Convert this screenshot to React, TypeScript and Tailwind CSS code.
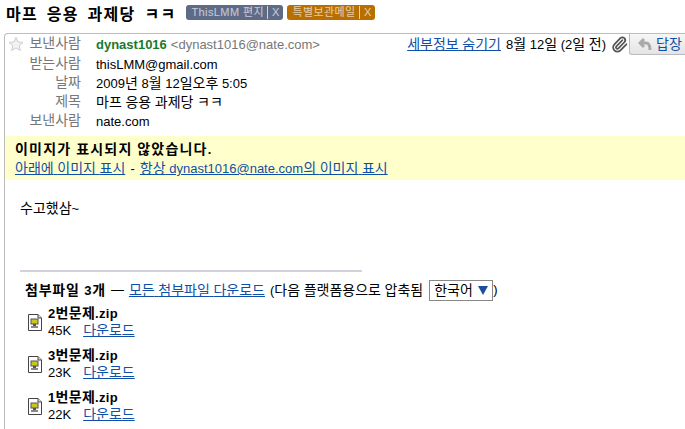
import { Paperclip } from "lucide-react";

const FONT = "font-['Liberation_Sans','Noto_Sans_CJK_KR',sans-serif]";
const LINK = "text-[#0f4fa8] underline";

const headerRows = [
  { label: "받는사람", value: "thisLMM@gmail.com" },
  { label: "날짜", value: "2009년 8월 12일오후 5:05" },
  { label: "제목", value: "마프 응용 과제당 ㅋㅋ" },
  { label: "보낸사람", value: "nate.com" },
];

const files = [
  { name: "2번문제.zip", size: "45K" },
  { name: "3번문제.zip", size: "23K" },
  { name: "1번문제.zip", size: "22K" },
];

// the hangul in the shot runs wider than the latin, so it gets a size of its own
const T = ({ s }: { s: string }) => (
  <>
    {s.split(/([\u3131-\uD7A3]+)/).map((part, i) =>
      i % 2 ? (
        <span key={i} className="text-[14px]">
          {part}
        </span>
      ) : (
        part
      ),
    )}
  </>
);

const Label = ({ text, color, width }: { text: string; color: string; width: string }) => (
  <span className={`flex h-[15px] items-center rounded-[3px] text-[11px] text-white/65 ${color} ${width}`}>
    <span className="flex-1 pl-[5px] tracking-[0.4px] whitespace-nowrap">{text}</span>
    <span className="border-l border-white/70 px-[4px] leading-[13px]">X</span>
  </span>
);

const ZipIcon = () => (
  <svg width="14" height="17" viewBox="0 0 14 17" className="shrink-0">
    <path d="M0.5 0.5H10L13.500 4V16.500H0.5Z" fill="#fff" stroke="#444" />
    <path d="M10 0.5V4H13.500" fill="#ddd" stroke="#444" />
    <rect x="3" y="5" width="7" height="5" fill="#c8c820" stroke="#555" />
    <rect x="5" y="10" width="3" height="2" fill="#555" />
    <rect x="3" y="12" width="7" height="2" fill="#888" />
  </svg>
);

export default function App() {
  return (
    <div className={`h-[429px] w-[685px] overflow-hidden bg-white text-[13px] text-black ${FONT}`}>
      <div className="flex h-[33px] items-center pb-[4px] pl-[6px]">
        <h1 className="text-[16px] font-bold tracking-[1.3px] [word-spacing:3px] whitespace-nowrap">마프 응용 과제당 ㅋㅋ</h1>
        <div className="mb-[4px] ml-[10px] flex gap-[4px]">
          <Label text="ThisLMM 편지" color="bg-[#5e6b87]" width="w-[97px]" />
          <Label text="특별보관메일" color="bg-[#b86f00]" width="w-[88px]" />
        </div>
      </div>

      <div className="ml-[4px] h-[396px] rounded-tl-[4px] border-t border-l border-[#bdbdbd]">
        <div className="h-[102px]">
          <div className="flex h-[21px]">
            <div className="flex w-[76px] items-center justify-end pb-[2px] text-[14px] text-[#777]">
              <svg width="16" height="16" viewBox="0 0 24 24" className="mr-[5px]">
                <path d="M12 2l3 7 7.500 .6-5.700 4.900 1.800 7.300L12 17.900 5.400 21.800l1.800-7.300L1.500 9.600 9 9z" fill="#f2f2f2" stroke="#ccc" strokeWidth="1.500" />
              </svg>
              보낸사람
            </div>
            <div className="ml-[15px] flex items-center">
              <b className="text-[#1a7a2c]">dynast1016</b>
              <span className="ml-[4px] text-[#777]">&lt;dynast1016@nate.com&gt;</span>
            </div>
            <div className="ml-auto flex items-center whitespace-nowrap">
              <a className={LINK}>
                <T s="세부정보 숨기기" />
              </a>
              <span className="ml-[5px]">
                <T s="8월 12일 (2일 전)" />
              </span>
              <Paperclip size={17} strokeWidth={2.5} className="ml-[5px] text-[#555]" />
              <div className="ml-[1px] flex h-[21px] w-[56px] items-center gap-[4px] self-start rounded-bl-[3px] border-b border-l border-[#bbb] bg-gradient-to-b from-[#f6f6f6] to-[#e4e4e4] pl-[8px] text-[14px] text-[#0f4fa8]">
                <svg width="14" height="14" viewBox="0 0 14 14" className="shrink-0">
                  <path d="M6 2L2 6L6 10M2 6H8C11 6 12 8 12 13" fill="none" stroke="#aaa" strokeWidth="3" />
                </svg>
                답장
              </div>
            </div>
          </div>
          {headerRows.map((row) => (
            <div key={row.value} className="flex h-[19px] items-center leading-[19px]">
              <div className="w-[76px] pb-[3px] text-right text-[14px] text-[#777]">{row.label}</div>
              <div className="ml-[15px]">
                <T s={row.value} />
              </div>
            </div>
          ))}
        </div>

        <div className="h-[44px] bg-[#ffffcc] pt-[4px] pl-[10px] leading-[18px]">
          <b className="block tracking-[1.2px]">
            <T s="이미지가 표시되지 않았습니다." />
          </b>
          <a className={LINK}>
            <T s="아래에 이미지 표시" />
          </a>
          <span className="mx-[1.500px]"> - </span>
          <a className={LINK}>
            <T s="항상 dynast1016@nate.com의 이미지 표시" />
          </a>
        </div>

        <p className="pt-[19px] pl-[15px] leading-[18px]">
          <T s="수고했삼~" />
        </p>

        <div className="mt-[52px] ml-[15px] h-[2px] w-[342px] bg-[#d2d2dc]" />

        <div className="mt-[8px] flex h-[20px] items-center pl-[20px] whitespace-nowrap">
          <b className="tracking-[0.8px]">
            <T s="첨부파일 3개" />
          </b>
          <span className="mx-[5px]">—</span>
          <a className={LINK}>
            <T s="모든 첨부파일 다운로드" />
          </a>
          <span className="ml-[5px]">
            <T s="(다음 플랫폼용으로 압축됨" />
          </span>
          <span className="ml-[6px] flex h-[21px] w-[64px] items-center border border-[#888] pl-[4px] text-[14px]">
            한국어
            <svg width="10" height="9" viewBox="0 0 10 9" className="ml-[5px]">
              <path d="M0 0H10L5 9Z" fill="#1a4fa0" />
            </svg>
          </span>
          <span>)</span>
        </div>

        <div className="mt-[5px] flex flex-col gap-[8px] pl-[23px]">
          {files.map((file) => (
            <div key={file.name} className="flex items-center gap-[6px]">
              <ZipIcon />
              <div className="leading-[17px]">
                <b className="block tracking-[0.3px]">
                  <T s={file.name} />
                </b>
                <span>{file.size}</span>
                <a className={`ml-[12px] ${LINK}`}>
                  <T s="다운로드" />
                </a>
              </div>
            </div>
          ))}
        </div>
      </div>
    </div>
  );
}
